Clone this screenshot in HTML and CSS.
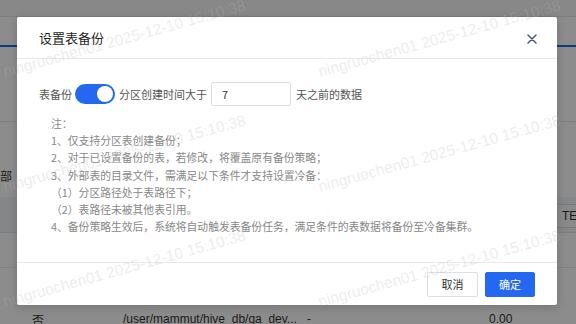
FILE: index.html
```html
<!DOCTYPE html>
<html lang="zh-CN">
<head>
  <meta charset="UTF-8" />
  <title>设置表备份</title>
  <link rel="stylesheet" href="styles.css">
</head>
<body>

  <!-- page derrière la modale -->
  <div class="page">
    <div class="topbar"></div>
    <div class="tabs"></div>
    <div class="filters"></div>
    <div class="table-row tall"><span class="cell-cut">部</span></div>
    <div class="table-head"><span class="tag">TE</span></div>
    <div class="table-row"></div>
    <div class="table-row data">
      <span class="cell c1">否</span>
      <span class="cell c2">/user/mammut/hive_db/qa_dev...</span>
      <span class="cell c3">-</span>
      <span class="cell c4">0.00</span>
    </div>
  </div>

  <div class="mask">
    <div class="modal">
      <div class="modal-header">
        <span class="modal-title">设置表备份</span>
        <button class="modal-close">
          <svg width="10" height="10" viewBox="0 0 10 10"><path d="M1 1L9 9M9 1L1 9" stroke="#4e5969" stroke-width="1.5" stroke-linecap="round" fill="none"/></svg>
        </button>
      </div>

      <div class="modal-body">
        <div class="backup-row">
          <span class="label">表备份</span>
          <span class="switch"><span class="switch-knob"></span></span>
          <span class="label">分区创建时间大于</span>
          <input class="days-input" type="text" value="7" />
          <span class="label">天之前的数据</span>
        </div>

        <div class="notes">
          <p>注：</p>
          <p>1、仅支持分区表创建备份；</p>
          <p>2、对于已设置备份的表，若修改，将覆盖原有备份策略；</p>
          <p>3、外部表的目录文件，需满足以下条件才支持设置冷备：</p>
          <p>（1）分区路径处于表路径下；</p>
          <p>（2）表路径未被其他表引用。</p>
          <p>4、备份策略生效后，系统将自动触发表备份任务，满足条件的表数据将备份至冷备集群。</p>
        </div>
      </div>

      <div class="modal-footer">
        <button class="btn">取消</button>
        <button class="btn btn-primary">确定</button>
      </div>
    </div>
  </div>

  <div class="watermark">
    <span>ningruochen01 2025-12-10 15:10:38</span>
    <span>ningruochen01 2025-12-10 15:10:38</span>
    <span>ningruochen01 2025-12-10 15:10:38</span>
    <span>ningruochen01 2025-12-10 15:10:38</span>
    <span>ningruochen01 2025-12-10 15:10:38</span>
    <span>ningruochen01 2025-12-10 15:10:38</span>
  </div>

</body>
</html>
```

FILE: styles.css
```css
html, body {
  margin: 0;
  width: 576px;
  height: 324px;
  overflow: hidden;
}

body {
  font-family: "Noto Sans CJK SC", sans-serif;
  background: #ffffff;
  position: relative;
}

/* page de fond */
.page {
  font-family: "Liberation Sans", "Noto Sans CJK SC", sans-serif;
  font-size: 12px;
  color: #333;
}

.topbar {
  height: 16px;
  background: #f7f7f7;
  border-bottom: 1px solid #e3e3e3;
}

.tabs {
  height: 28px;
  border-bottom: 2px solid #2468f2;
}

.filters {
  height: 74px;
  border-bottom: 1px solid #e8e8e8;
}

.table-row {
  height: 34px;
  border-bottom: 1px solid #e8e8e8;
  display: flex;
  align-items: center;
}

.table-row.tall {
  height: 75px;
  align-items: flex-end;
  border-bottom: none;
}

.cell-cut {
  padding-bottom: 13px;
  font-size: 12px;
}

.table-head {
  height: 35px;
  background: #f3f4f6;
  border-bottom: 1px solid #e3e3e3;
  display: flex;
  justify-content: flex-end;
  align-items: center;
}

.tag {
  width: 14px;
  height: 22px;
  line-height: 22px;
  padding-left: 6px;
  margin-top: 2px;
  border: 1px solid #dcdfe6;
  border-right: none;
  background: #fafafa;
  font-size: 12px;
  overflow: hidden;
}

.table-row.data {
  height: 24px;
  margin-top: 39px;
  border-bottom: none;
}

.cell.c1 { width: 91px; padding-left: 32px; }
.cell.c2 { width: 184px; }
.cell.c3 { width: 182px; }

/* modale */
.mask {
  position: absolute;
  inset: 0;
  background: rgba(0, 0, 0, 0.45);
}

.modal {
  margin: 17px 0 0 17px;
  width: 540px;
  height: 288px;
  background: #fff;
  border-radius: 2px;
  box-shadow: 0 2px 10px rgba(0, 0, 0, 0.18);
  display: flex;
  flex-direction: column;
}

.modal-header {
  height: 41px;
  padding: 0 20px 0 22px;
  display: flex;
  align-items: center;
  justify-content: space-between;
  border-bottom: 1px solid #e8e8e8;
}

.modal-title {
  font-size: 13px;
  color: #1f1f1f;
}

.modal-close {
  border: none;
  background: none;
  padding: 0;
  width: 10px;
  height: 10px;
  display: flex;
  margin-top: 2px;
}

.modal-body {
  flex: 1;
  padding: 23px 22px 0 22px;
}

.backup-row {
  display: flex;
  align-items: center;
  height: 24px;
  font-size: 11px;
  color: #555;
}

.switch {
  width: 40px;
  height: 20px;
  box-sizing: border-box;
  padding: 2px;
  border-radius: 10px;
  background: #2468f2;
  display: flex;
  justify-content: flex-end;
  margin: 0 4px 0 3px;
}

.switch-knob {
  width: 16px;
  height: 16px;
  border-radius: 50%;
  background: #fff;
}

.days-input {
  width: 80px;
  height: 24px;
  box-sizing: border-box;
  margin: 0 5px 0 4px;
  padding: 0 10px;
  border: 1px solid #dcdfe6;
  border-radius: 2px;
  font-family: "Noto Sans CJK SC", sans-serif;
  font-size: 11px;
  color: #333;
  outline: none;
}

.notes {
  margin-top: 9px;
  padding-left: 12px;
  font-size: 10.8px;
  line-height: 17.2px;
  color: #888;
}

.notes p {
  margin: 0;
}

.modal-footer {
  height: 42px;
  border-top: 1px solid #e8e8e8;
  padding: 0 22px;
  display: flex;
  justify-content: flex-end;
  align-items: center;
  gap: 7px;
}

.btn {
  height: 25px;
  width: 51px;
  padding: 0;
  border: 1px solid #dcdfe6;
  border-radius: 2px;
  background: #fff;
  font-family: "Noto Sans CJK SC", sans-serif;
  font-size: 11px;
  color: #333;
}

.btn-primary {
  width: 50px;
  background: #2468f2;
  border-color: #2468f2;
  color: #fff;
}

/* filigrane */
.watermark {
  position: absolute;
  inset: 0;
  overflow: hidden;
  pointer-events: none;
  display: grid;
  grid-template-columns: 315px 315px;
  grid-auto-rows: 115px;
  padding: 63px 0 0 5px;
  font-family: "Liberation Sans", sans-serif;
  font-size: 15.5px;
  line-height: 18px;
  color: rgba(180, 180, 180, 0.26);
}

.watermark span {
  white-space: nowrap;
  transform: rotate(-15.5deg);
  transform-origin: 0 14px;
}
```
